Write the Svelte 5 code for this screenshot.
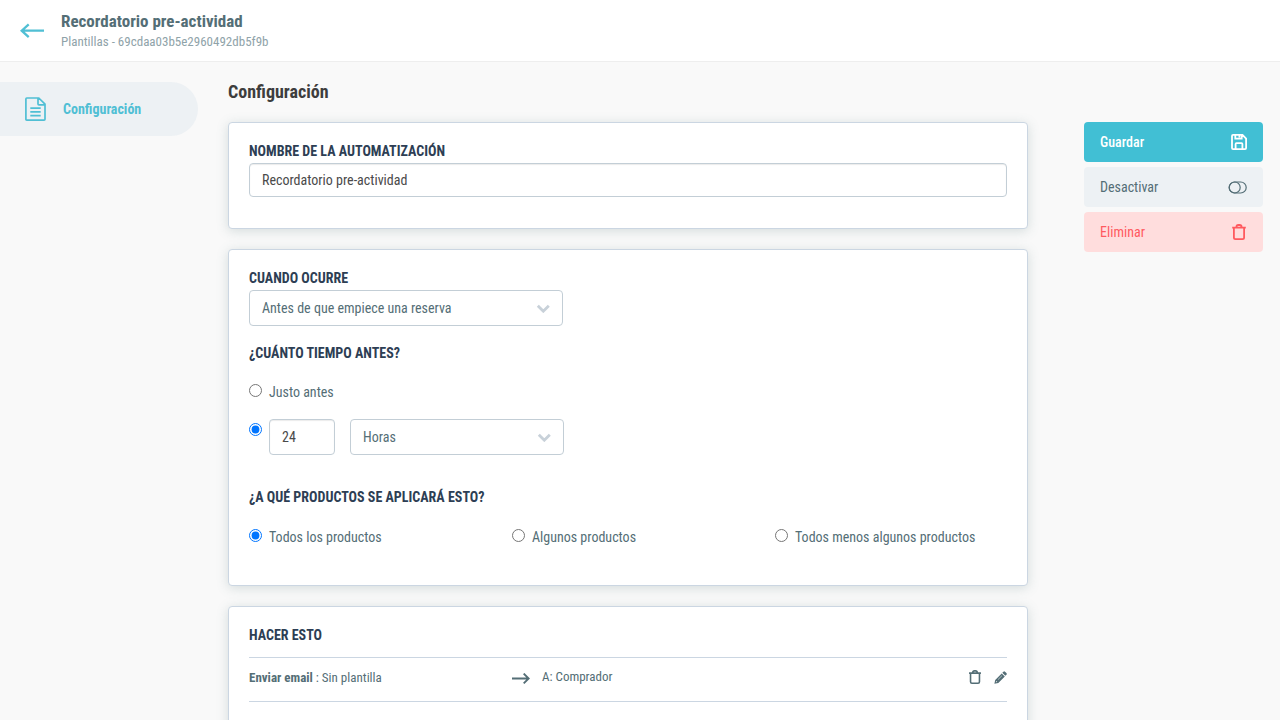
<script>
  let name = $state('Recordatorio pre-actividad');
  let timing = $state('custom');
  let amount = $state('24');
  let scope = $state('all');

  const scopes = [
    { id: 'all', label: 'Todos los productos' },
    { id: 'some', label: 'Algunos productos' },
    { id: 'except', label: 'Todos menos algunos productos' }
  ];
</script>

{#snippet trash(size)}
  <svg width={size} height={size} viewBox="0 0 16 16" fill="none" stroke="currentColor" stroke-width="1.8">
    <path d="M1.200 3.600h13.600M2.900 3.800v9.700q0 1.600 1.600 1.600h7q1.600 0 1.600-1.600V3.800M5.400 3.300q0-2.300 2-2.300h1.200q2 0 2 2.300" />
  </svg>
{/snippet}

{#snippet chevron()}
  <svg class="chevron" width="14" height="10" viewBox="0 0 14 10" fill="none" stroke="#c8d1d9" stroke-width="2.8">
    <path d="M1.800 2.700 7.300 8.200l5.500-5.500" />
  </svg>
{/snippet}

<div class="page">
  <header>
    <button type="button" class="back" aria-label="Volver">
      <svg width="24" height="16" viewBox="0 0 24 16" fill="none" stroke="currentColor" stroke-width="2.300">
        <path d="M24 7.700H2M8.700 1.300 1.700 7.700l7 6.400" />
      </svg>
    </button>
    <div class="heading">
      <h1>Recordatorio pre-actividad</h1>
      <p>Plantillas - 69cdaa03b5e2960492db5f9b</p>
    </div>
  </header>

  <div class="body">
    <nav>
      <a href="#config" class="nav-item">
        <svg width="22" height="25" viewBox="0 0 22 25" fill="none" stroke="currentColor" stroke-width="1.700">
          <path d="M1.800 1h12L20 7.200v15.100q0 .9-.9.9H1.800q-.9 0-.9-.9V1.900Q.9 1 1.800 1ZM13 1v5.900q0 .9.9.9H20M5.300 11.200h10.400M5.300 14.900h10.400M5.300 18.600h10.400" />
        </svg>
        <span>Configuración</span>
      </a>
    </nav>

    <main>
      <h2>Configuración</h2>

      <section class="card name-card">
        <label class="title" for="name">Nombre de la automatización</label>
        <input id="name" class="field" type="text" bind:value={name} />
      </section>

      <section class="card when-card">
        <h3 class="title">Cuando ocurre</h3>
        <div class="select event"><span>Antes de que empiece una reserva</span>{@render chevron()}</div>

        <h3 class="title how-long">¿Cuánto tiempo antes?</h3>
        <label class="radio just">
          <input type="radio" value="now" bind:group={timing} />
          <span>Justo antes</span>
        </label>
        <div class="custom">
          <input type="radio" value="custom" bind:group={timing} aria-label="Tiempo" />
          <input class="field amount" type="text" bind:value={amount} aria-label="Cantidad" />
          <div class="select unit"><span>Horas</span>{@render chevron()}</div>
        </div>

        <h3 class="title which">¿A qué productos se aplicará esto?</h3>
        <div class="scopes">
          {#each scopes as s}
            <label class="radio">
              <input type="radio" value={s.id} bind:group={scope} />
              <span>{s.label}</span>
            </label>
          {/each}
        </div>
      </section>

      <section class="card do-card">
        <h3 class="title">Hacer esto</h3>
        <div class="task">
          <div class="what"><b>Enviar email</b> : Sin plantilla</div>
          <div class="to">
            <svg width="18" height="12" viewBox="0 0 18 12" fill="none" stroke="currentColor" stroke-width="1.900">
              <path d="M0 5.500h16.500M11.700.6l5 4.900-5 4.900" />
            </svg>
            <span>A: Comprador</span>
          </div>
          <div class="tools">
            {@render trash(14)}
            <svg width="13" height="13" viewBox="0 0 13 13" fill="currentColor">
              <path fill-rule="evenodd" d="M.4 12.800 1.200 8.900 7.700 2.400l3.100 3.100L4.300 12ZM2.100 9.900l-.2 1.400 1.400-.2ZM3.800 8.500l.3.300 4-4-.3-.3ZM8.300 1.800 9.400.7q.8-.8 1.600 0l1.400 1.400q.8.800 0 1.600l-1.100 1.100Z" />
            </svg>
          </div>
        </div>
      </section>
    </main>

    <aside>
      <button type="button" class="action save">
        Guardar
        <svg width="16" height="16" viewBox="0 0 16 16" fill="none" stroke="currentColor" stroke-width="1.800">
          <path d="M1 2q0-1.100 1.100-1.100h9.400L15.100 4.500V14q0 1.100-1.100 1.100H2.100Q1 15.100 1 14ZM4.300 1v3.700h6.400V1M4.600 15V9.900q0-.8.8-.8h5.200q.8 0 .8.8V15M8.400 1v2.600" />
        </svg>
      </button>
      <button type="button" class="action">
        Desactivar
        <svg width="19" height="13" viewBox="0 0 19 13" fill="none" stroke="currentColor" stroke-width="1.200">
          <rect x="1.200" y="1" width="17" height="11" rx="5.500" />
          <circle cx="6.700" cy="6.500" r="5.500" />
        </svg>
      </button>
      <button type="button" class="action delete">
        Eliminar
        {@render trash(16)}
      </button>
    </aside>
  </div>
</div>

<style>
  :global(body) {
    background: #f9f9f9;
    overflow: hidden;
  }

  .page, .page input, .page button {
    font-family: "Roboto Condensed", Roboto, sans-serif;
    font-stretch: 75%;
  }

  .page {
    height: 720px;
    overflow: hidden;
    color: #546e76;
    font-size: 14px;
    line-height: 20px;
  }

  h1, h2, h3, p { margin: 0; }
  svg { display: block; flex-shrink: 0; }

  header {
    display: flex;
    align-items: center;
    height: 61px;
    box-sizing: content-box;
    padding-left: 20px;
    background: #fff;
    border-bottom: 1px solid #eeeeee;
  }

  .back {
    padding: 0;
    margin-right: 17px;
    background: none;
    border: none;
    color: #50bfd4;
    cursor: pointer;
  }

  .heading { padding-top: 1px; }
  .heading h1 {
    font-size: 17px;
    line-height: 20px;
    font-weight: 700;
  }
  .heading p {
    margin-top: 1px;
    font-size: 13px;
    line-height: 20px;
    color: #8fa3a9;
  }

  .body {
    display: flex;
    align-items: flex-start;
  }

  nav {
    width: 228px;
    padding-top: 20px;
    flex-shrink: 0;
  }
  .nav-item {
    display: flex;
    align-items: center;
    gap: 16px;
    width: 198px;
    height: 54px;
    padding-left: 25px;
    box-sizing: border-box;
    border-radius: 0 27px 27px 0;
    background: #edf1f4;
    color: #50bfd4;
    font-weight: 700;
    text-decoration: none;
  }

  main {
    width: 800px;
    flex-shrink: 0;
    padding-top: 18px;
  }
  h2 {
    font-size: 18px;
    line-height: 24px;
    color: #3d3d3d;
    font-weight: 700;
    margin-bottom: 18px;
  }

  .card {
    box-sizing: border-box;
    padding: 18px 20px;
    margin-bottom: 20px;
    background: #fff;
    border: 1px solid #cbd6e2;
    border-radius: 4px;
    box-shadow: 0 2px 12px rgba(84, 118, 118, 0.22);
  }
  .name-card { height: 107px; }
  .when-card { height: 337px; }
  .do-card { height: 200px; }

  .title {
    display: block;
    font-size: 14px;
    line-height: 20px;
    font-weight: 700;
    color: #2d3e54;
    text-transform: uppercase;
  }

  .field {
    display: block;
    box-sizing: border-box;
    width: 100%;
    height: 34px;
    margin: 2px 0 0;
    padding: 0 12px;
    border: 1px solid #c3ced6;
    border-radius: 4px;
    background: #fff;
    box-shadow: inset 0 1px 1px rgba(0, 0, 0, 0.08);
    color: #4a4a4a;
    font-size: 14px;
    outline: none;
  }

  .select {
    display: flex;
    align-items: center;
    justify-content: space-between;
    box-sizing: border-box;
    height: 36px;
    padding: 0 12px;
    border: 1px solid #c3ced6;
    border-radius: 4px;
    background: #fff;
  }
  .event {
    width: 314px;
    margin-top: 2px;
  }
  .how-long { margin-top: 17px; }

  .radio {
    display: flex;
    align-items: flex-start;
  }
  .radio input, .custom input[type='radio'] {
    width: 13px;
    height: 13px;
    margin: 2px 7px 0 0;
    flex-shrink: 0;
  }
  .just { margin-top: 19px; }

  .custom {
    display: flex;
    align-items: flex-start;
    margin-top: 17px;
  }
  .custom input[type='radio'] { margin-top: 4px; }
  .amount {
    width: 66px;
    height: 36px;
    margin: 0 15px 0 0;
  }
  .unit { width: 214px; }

  .which { margin-top: 32px; }
  .scopes {
    display: grid;
    grid-template-columns: repeat(3, 263px);
    margin-top: 20px;
  }

  .task {
    display: flex;
    align-items: center;
    height: 43px;
    margin-top: 12px;
    border-top: 1px solid #cbd6e2;
    border-bottom: 1px solid #cbd6e2;
    font-size: 13px;
  }
  .what {
    width: 263px;
    padding-bottom: 3px;
  }
  .to {
    display: flex;
    align-items: center;
    gap: 12px;
    flex: 1;
    padding-bottom: 2px;
  }
  .to span { padding-bottom: 3px; }
  .tools {
    display: flex;
    align-items: center;
    gap: 12px;
    padding-bottom: 5px;
  }

  aside {
    display: flex;
    flex-direction: column;
    gap: 5px;
    width: 179px;
    margin: 60px 0 0 56px;
  }
  .action {
    display: flex;
    align-items: center;
    justify-content: space-between;
    height: 40px;
    padding: 0 16px;
    border: none;
    border-radius: 4px;
    background: #edf1f4;
    color: #546e76;
    font-size: 14px;
    cursor: pointer;
  }
  .save {
    background: #41bfd4;
    color: #fff;
    font-weight: 500;
  }
  .delete {
    background: #ffdddd;
    color: #ff5a5f;
  }
</style>
